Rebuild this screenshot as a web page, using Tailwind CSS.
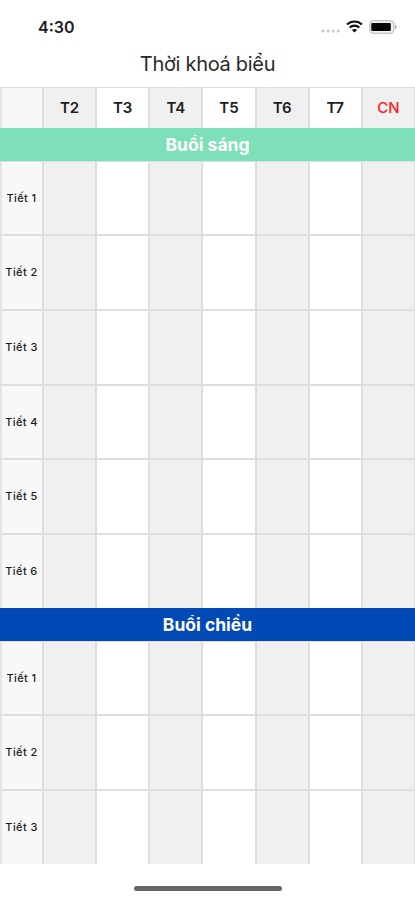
<!DOCTYPE html>
<html lang="vi">
<head>
    <meta charset="UTF-8">
    <meta name="viewport" content="width=device-width, initial-scale=1.0">
    <title>Thời khoá biểu</title>
    <script src="https://cdn.jsdelivr.net/npm/@tailwindcss/browser@4"></script>
</head>
<body class="bg-white text-[#1c1c1c] font-['Inter',sans-serif] overflow-hidden">
    <div class="w-[415px] h-[900px] flex flex-col">
        <!-- Status bar -->
        <div class="h-[46px] shrink-0 flex justify-between pl-[38px] pr-[18px] pt-2">
            <span class="text-[16px] leading-[38px] font-semibold">4:30</span>
            <div class="flex items-center h-[37px]">
                <svg class="w-[20px] h-[6px] mt-[9px] mr-[5px]" viewBox="0 0 20 6" fill="#c9c9c9">
                    <circle cx="2" cy="3" r="1.6"/>
                    <circle cx="7.2" cy="3" r="1.6"/>
                    <circle cx="12.2" cy="3" r="1.6"/>
                    <circle cx="17.2" cy="3" r="1.6"/>
                </svg>
                <svg class="w-[17px] h-[13px] mr-[6px]" viewBox="0 0 17 13" fill="none" stroke="#111" stroke-width="2.1">
                    <path d="M1 4.6C5.2 0.5 11.8 0.5 16 4.6"/>
                    <path d="M3.7 7.6C6.4 5 10.6 5 13.3 7.6"/>
                    <path d="M8.5 12.6L5.9 9.9C7.4 8.6 9.6 8.6 11.1 9.9Z" fill="#111" stroke="none"/>
                </svg>
                <svg class="w-[28px] h-[14px]" viewBox="0 0 28 14">
                    <rect x="0.8" y="0.8" width="24" height="12.4" rx="3.4" fill="#f4f4f4" stroke="#c9c9c9" stroke-width="1.5"/>
                    <rect x="2.3" y="3" width="19.5" height="8" rx="1" fill="#050505"/>
                    <path d="M26 5v4c1.3-.4 1.6-1.2 1.6-2s-.3-1.6-1.6-2z" fill="#aaa"/>
                </svg>
            </div>
        </div>

        <h1 class="h-[41px] shrink-0 text-center text-[20px] leading-[36px] tracking-[-0.3px] font-normal text-[#2a2a2a]">Thời khoá biểu</h1>

        <!-- Weekdays -->
        <div id="days" class="h-[42px] shrink-0 grid grid-cols-[42px_repeat(7,53.14px)_1px] border-t border-[#dedede] text-[15px] tracking-[-0.1px] font-semibold"></div>

        <div class="relative z-10 h-[33px] -mt-px shrink-0 bg-[#7ee0b8] text-white text-center text-[17.5px] leading-[34px] font-bold">Buổi sáng</div>
        <div id="morning" class="h-[448.2px] -mt-[1.5px] shrink-0 flex flex-col"></div>

        <div class="relative z-10 h-[33px] mt-[0.5px] shrink-0 bg-[#0149b5] text-white text-center text-[17.5px] leading-[34px] font-bold">Buổi chiều</div>
        <div id="afternoon" class="h-[224px] -mt-[1.5px] shrink-0 flex flex-col"></div>

        <!-- Home indicator -->
        <div class="w-[148px] h-[5px] shrink-0 mt-[22.5px] ml-[134px] rounded-full bg-[#666]"></div>
    </div>
    <script>
        const days = ['T2', 'T3', 'T4', 'T5', 'T6', 'T7', 'CN'];
        const first = 'border-l-2 border-[#e4e4e4] bg-[#f8f8f8]';
        const shaded = 'border-l-2 border-[#dedede] bg-[#f0f0f0]';
        const plain = 'border-l-2 border-[#dedede] bg-white';

        document.getElementById('days').innerHTML = `
            <div class="${first}"></div>
            ${days.map((day, i) => `
                <div class="${i % 2 ? plain : shaded} flex items-center justify-center ${day === 'CN' ? 'text-[#ff2020] font-medium' : ''}">${day}</div>
            `).join('')}
            <div class="bg-[#dedede]"></div>`;

        function renderLessons(id, count) {
            let html = '';
            for (let n = 1; n <= count; n++) {
                html += `
                    <div class="flex-1 grid grid-cols-[42px_repeat(7,53.14px)_1px] border-t-2 border-[#dedede]">
                        <div class="${first} flex items-center justify-center whitespace-nowrap pr-[1px] text-[11px] tracking-[0.4px] font-medium">Tiết ${n}</div>
                        ${days.map((day, i) => `<div class="${i % 2 ? plain : shaded}"></div>`).join('')}
                        <div class="bg-[#dedede]"></div>
                    </div>`;
            }
            document.getElementById(id).innerHTML = html;
        }

        renderLessons('morning', 6);
        renderLessons('afternoon', 3);
    </script>
</body>
</html>
